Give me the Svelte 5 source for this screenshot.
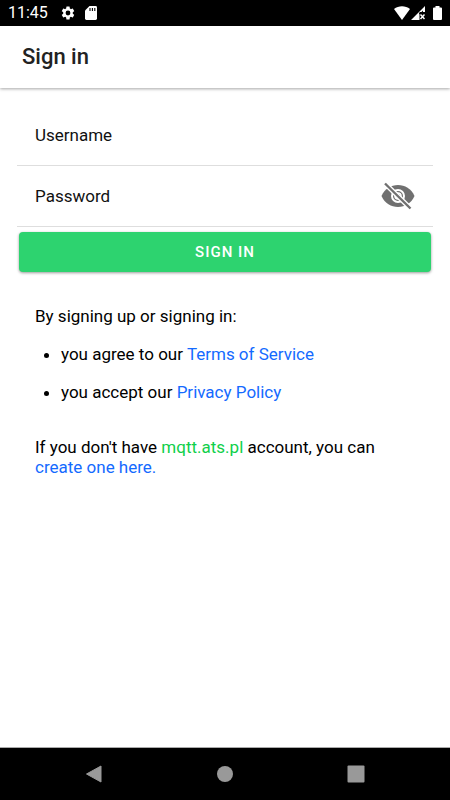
<script lang="ts">
  let username = $state("");
  let password = $state("");
  let showPassword = $state(false);
</script>

<div class="screen">
  <div class="status-bar">
    <span class="time">11:45</span>
    <svg class="gear" width="16" height="16" viewBox="0 0 24 24" aria-hidden="true">
      <path fill="#fff" d="M19.14 12.94c.04-.3.06-.61.06-.94s-.02-.64-.07-.94l2.03-1.58a.49.49 0 0 0 .12-.61l-1.92-3.32a.49.49 0 0 0-.59-.22l-2.39.96a7 7 0 0 0-1.62-.94l-.36-2.54a.48.48 0 0 0-.48-.41h-3.84a.48.48 0 0 0-.47.41l-.36 2.54c-.59.24-1.13.57-1.62.94l-2.39-.96a.48.48 0 0 0-.59.22L2.74 8.87a.47.47 0 0 0 .12.61l2.03 1.58c-.05.3-.09.63-.09.94s.02.64.07.94l-2.03 1.58a.49.49 0 0 0-.12.61l1.92 3.32c.12.22.37.29.59.22l2.39-.96c.5.38 1.03.7 1.62.94l.36 2.54c.05.24.24.41.48.41h3.84c.24 0 .44-.17.47-.41l.36-2.54c.59-.24 1.13-.56 1.62-.94l2.39.96c.22.08.47 0 .59-.22l1.92-3.32a.47.47 0 0 0-.12-.61l-2.01-1.58zM12 15.6a3.6 3.6 0 1 1 0-7.2 3.6 3.6 0 0 1 0 7.2z" />
    </svg>
    <svg class="card" width="12" height="14" viewBox="0 0 12 14" aria-hidden="true">
      <path fill="#fff" d="M4.5 0H10.6Q12 0 12 1.4V12.6Q12 14 10.6 14H1.4Q0 14 0 12.6V4.5Z" />
      <path stroke="#000" stroke-width="1.1" d="M5 2v3M7.4 2v3M9.8 2v3" />
    </svg>
    <span class="spacer"></span>
    <svg width="16" height="14" viewBox="0 0 16 14" aria-hidden="true">
      <path fill="#fff" d="M0 3C4.5-.8 11.5-.8 16 3L8 14Z" />
    </svg>
    <svg class="signal" width="14" height="14" viewBox="0 0 14 14" aria-hidden="true">
      <path fill="#fff" d="M14 0V6H8.5V14H0Z" />
      <path fill="#000" d="M8 8.5 12 4.5V7H8Z" />
      <path stroke="#fff" stroke-width="1.5" d="M9.5 8.5l4 4.5M13.5 8.5l-4 4.5" />
    </svg>
    <svg class="battery" width="9" height="14" viewBox="0 0 9 14" aria-hidden="true">
      <path fill="#fff" d="M2.5 0h4v1.5H8q1 0 1 1V13q0 1-1 1H1q-1 0-1-1V2.5q0-1 1-1h1.5Z" />
    </svg>
  </div>

  <header>
    <h1>Sign in</h1>
  </header>

  <main>
    <form onsubmit={(e) => e.preventDefault()}>
      <div class="field">
        <input
          type="text"
          aria-label="Username"
          placeholder="Username"
          autocomplete="username"
          bind:value={username}
        />
      </div>
      <div class="field">
        <input
          type={showPassword ? "text" : "password"}
          aria-label="Password"
          placeholder="Password"
          autocomplete="current-password"
          bind:value={password}
        />
        <button
          type="button"
          class="toggle"
          aria-label="Show password"
          aria-pressed={showPassword}
          onclick={() => (showPassword = !showPassword)}
        >
          <svg width="34" height="28" viewBox="0 0 34 28" aria-hidden="true">
            <path fill="#707070" d="M.5 14C4 6.500 10 3 17 3s13 3.500 16.500 11C30 21.500 24 25 17 25S4 21.500.5 14Z" />
            <circle cx="17" cy="14" r="6" fill="none" stroke="#fff" stroke-width="2" />
            <circle cx="17" cy="14" r="3" fill="none" stroke="#fff" stroke-width="1.5" />
            <path stroke="#fff" stroke-width="5" d="M3 .5 31 28" />
            <path stroke="#707070" stroke-width="2.4" d="M4 1.5 29.5 26.5" />
          </svg>
        </button>
      </div>
      <button type="submit" class="submit">SIGN IN</button>
    </form>

    <section class="terms">
      <p>By signing up or signing in:</p>
      <ul>
        <li>you agree to our <a href="#terms">Terms of Service</a></li>
        <li>you accept our <a href="#privacy">Privacy Policy</a></li>
      </ul>
      <p class="register">
        If you don't have <span class="server">mqtt.ats.pl</span> account, you can
        <a href="#register">create one here.</a>
      </p>
    </section>
  </main>

  <nav>
    <button type="button" aria-label="Back">
      <svg width="18" height="18" viewBox="0 0 18 18" aria-hidden="true">
        <path fill="#999" stroke="#999" stroke-linejoin="round" d="M1.5 9 16 1v16Z" />
      </svg>
    </button>
    <button type="button" aria-label="Home">
      <svg width="18" height="18" viewBox="0 0 18 18" aria-hidden="true">
        <circle cx="9" cy="9" r="8" fill="#999" />
      </svg>
    </button>
    <button type="button" aria-label="Recent apps">
      <svg width="18" height="18" viewBox="0 0 18 18" aria-hidden="true">
        <rect x=".5" y=".5" width="17" height="17" rx="1" fill="#999" />
      </svg>
    </button>
  </nav>
</div>

<style>
  :global(body) {
    margin: 0;
    background: #fff;
  }
  .screen {
    display: flex;
    flex-direction: column;
    min-height: 100vh;
    font-family: Roboto, "Liberation Sans", sans-serif;
    font-size: 17px;
    line-height: 20px;
    color: #000;
  }
  button,
  input {
    font: inherit;
    border: 0;
    padding: 0;
    background: none;
  }
  svg {
    display: block;
  }

  .status-bar {
    display: flex;
    align-items: center;
    height: 26px;
    padding: 0 8px;
    background: #000;
    color: #fff;
  }
  .time {
    font-size: 16px;
  }
  .gear {
    margin-left: 12px;
  }
  .card {
    margin-left: 9px;
  }
  .spacer {
    flex: 1;
  }
  .signal {
    margin-left: 1px;
  }
  .battery {
    margin-left: 8px;
  }

  header {
    padding: 20px 22px;
    box-shadow: 0 1px 3px rgba(0, 0, 0, 0.35);
  }
  h1 {
    margin: 0;
    font-size: 22px;
    line-height: 22px;
    font-weight: 500;
    color: #222;
  }

  main {
    flex: 1;
    padding: 17px;
  }
  .field {
    display: flex;
    align-items: center;
    height: 60px;
    padding: 0 18px;
    border-bottom: 1px solid #dedede;
  }
  input {
    flex: 1;
    min-width: 0;
    outline: none;
  }
  input::placeholder {
    color: #111;
    opacity: 1;
  }
  .toggle {
    cursor: pointer;
  }
  .submit {
    display: block;
    width: calc(100% - 4px);
    height: 40px;
    margin: 5px 2px 0;
    border-radius: 4px;
    background: #2dd36f;
    box-shadow: 0 1px 3px rgba(0, 0, 0, 0.4);
    color: #fff;
    font-size: 15px;
    font-weight: 500;
    letter-spacing: 1px;
    cursor: pointer;
  }

  .terms {
    padding: 34px 18px 0;
  }
  p {
    margin: 0;
  }
  ul {
    margin: 18px 0 0;
    padding-left: 26px;
  }
  li {
    margin-bottom: 18px;
  }
  a {
    color: #146aff;
    text-decoration: none;
  }
  .register {
    margin-top: 35px;
  }
  .server {
    color: #10cf4a;
  }

  nav {
    display: flex;
    justify-content: space-between;
    align-items: center;
    height: 52px;
    padding: 0 85px;
    border-top: 1px solid #aaa;
    background: #000;
  }
</style>
